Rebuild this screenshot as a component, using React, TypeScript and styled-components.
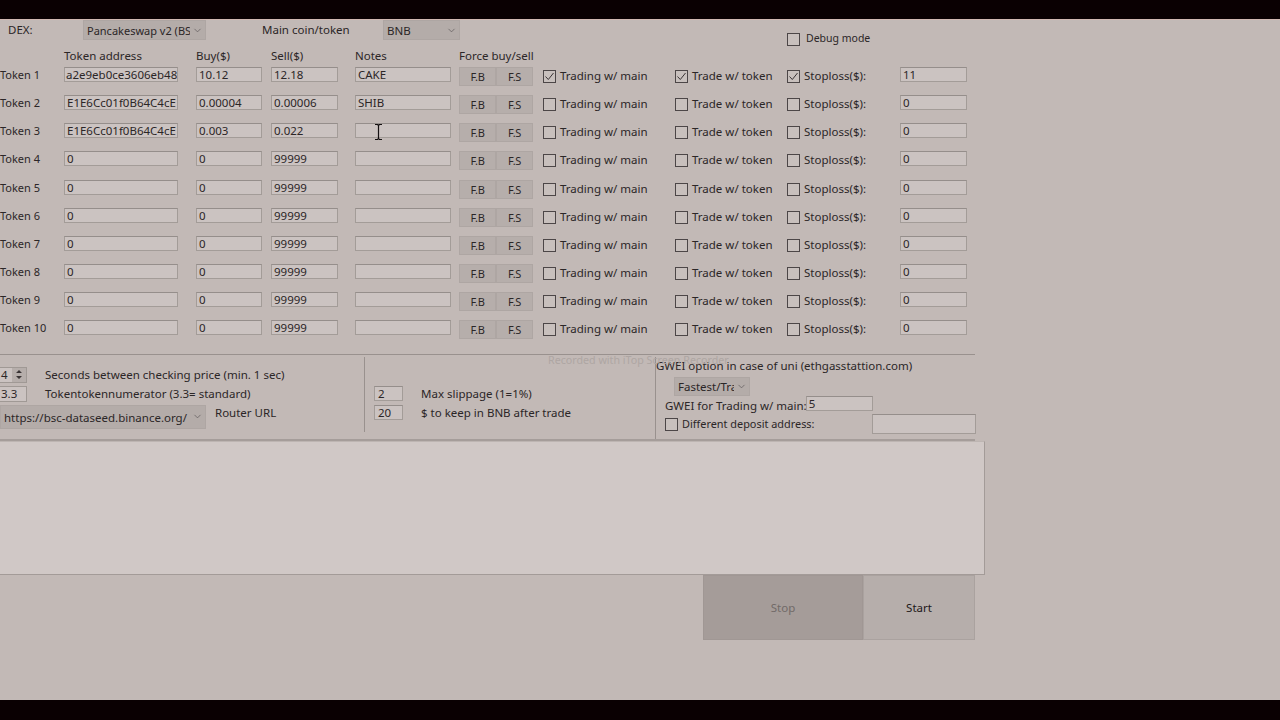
import { Fragment } from "react"
import styled, { createGlobalStyle } from "styled-components"
import { ChevronDown } from "lucide-react"

const GlobalStyle = createGlobalStyle`
	html, body {
		margin: 0;
		padding: 0;
		background: #0a0002;
	}
`

const Screen = styled.div`
	width: 1280px;
	height: 720px;
	overflow: hidden;
	display: flex;
	flex-direction: column;
	background: #0a0002;
	font-family: "Noto Sans", "Open Sans", sans-serif;
	font-size: 11.5px;
	color: #2b2627;
`

const Bar = styled.div<{ $h: number }>`
	flex: none;
	height: ${(p) => p.$h}px;
`

const Window = styled.div`
	position: relative;
	flex: 1;
	background: #c2b9b6;
	border-top: 1px solid #d0b8b2;
`

const TopRow = styled.div`
	display: flex;
	align-items: flex-start;
	width: 975px;
	height: 26px;
`

const TopLabel = styled.div<{ $w: number; $ml?: number }>`
	width: ${(p) => p.$w}px;
	margin-left: ${(p) => p.$ml ?? 0}px;
	height: 20px;
	line-height: 20px;
`

const Select = styled.div<{ $w: number; $h?: number; $small?: boolean }>`
	flex: none;
	display: flex;
	align-items: center;
	justify-content: space-between;
	box-sizing: border-box;
	width: ${(p) => p.$w}px;
	height: ${(p) => p.$h ?? 20}px;
	padding: 0 2px 0 3px;
	background: #b4aca9;
	border: 1px solid #aea6a3;
	font-size: ${(p) => (p.$small ? 11 : 11.5)}px;
	white-space: nowrap;
`

const SelectText = styled.span`
	overflow: hidden;
	flex: 1;
`

const UrlText = styled(SelectText)`
	padding-top: 2px;
`

const DebugToggle = styled.div`
	display: flex;
	align-items: center;
	gap: 6px;
	margin-left: auto;
	margin-top: 10px;
	width: 188px;
	font-size: 10.5px;
`

const columns = "64px 132px 75px 84px 104px 84px 132px 112px 113px 75px"

const HeaderRow = styled.div`
	display: grid;
	grid-template-columns: ${columns};
	width: 975px;
	height: 21px;
	line-height: 20px;
`

const Rows = styled.div`
	display: grid;
	grid-template-columns: ${columns};
	grid-auto-rows: 28.17px;
	width: 975px;
`

const TokenLabel = styled.div`
	height: 16px;
	line-height: 16px;
	font-size: 11px;
`

const Field = styled.div<{ $w?: number; $h?: number; $tight?: boolean }>`
	box-sizing: border-box;
	width: ${(p) => (p.$w ? `${p.$w}px` : "100%")};
	height: ${(p) => p.$h ?? 15}px;
	line-height: ${(p) => (p.$h ?? 15) - 1}px;
	padding-left: ${(p) => (p.$tight ? 1 : 2)}px;
	background: #cbc3c1;
	border: 1px solid #a39c98;
	border-top-color: #958e8b;
	overflow: hidden;
	white-space: nowrap;
`

const ButtonPair = styled.div`
	display: flex;
	width: 74px;
	height: 19px;
`

const SmallButton = styled.div`
	flex: 1;
	display: flex;
	align-items: center;
	justify-content: center;
	background: #b6aeab;
	border: 1px solid #aea6a3;
	font-size: 11px;
	letter-spacing: -0.3px;
`

const Option = styled.div<{ $small?: boolean }>`
	display: flex;
	align-items: flex-start;
	gap: 4px;
	line-height: 18px;
	font-size: ${(p) => (p.$small ? 10.9 : 11.5)}px;
	white-space: nowrap;
`

const Box = styled.span`
	flex: none;
	display: flex;
	align-items: center;
	justify-content: center;
	box-sizing: border-box;
	width: 13px;
	height: 13px;
	margin-top: 3px;
	border: 1px solid #4c4647;
	background: #c8c0bd;
`

const BottomPanels = styled.div`
	display: grid;
	grid-template-columns: 364px 291px 321px;
	width: 975px;
	height: 84px;
	margin-top: 5px;
	border-top: 1px solid #99918e;
	border-bottom: 2px solid #a59d9a;
`

const LeftPanel = styled.div`
	display: flex;
	flex-direction: column;
	gap: 3px;
	padding-top: 12px;
`

const MiddlePanel = styled.div`
	display: flex;
	flex-direction: column;
	gap: 3px;
	padding: 29px 0 0 9px;
	margin: 2px 0 7px;
	border-left: 1px solid #99918e;
`

const RightPanel = styled.div`
	display: flex;
	flex-direction: column;
	margin-top: 2px;
	border-left: 1px solid #99918e;
`

const SettingRow = styled.div`
	display: flex;
	align-items: center;
	height: 16px;
	gap: 18px;
`

const UrlRow = styled.div`
	display: flex;
	align-items: flex-start;
	gap: 9px;
`

const UrlLabel = styled.div`
	line-height: 16px;
`

const Spin = styled.div`
	display: flex;
	align-items: center;
	box-sizing: border-box;
	width: 27px;
	height: 16px;
	background: #cbc3c1;
	border: 1px solid #a09995;
	border-left: none;
`

const SpinValue = styled.span`
	flex: 1;
	padding-left: 1px;
`

const SpinArrows = styled.span`
	display: flex;
	align-items: center;
	justify-content: center;
	width: 14px;
	height: 100%;
	background: #b6aeab;
`

const SlipField = styled(Field)`
	width: 29px;
	flex: none;
	padding-left: 3px;
`

const GweiTitle = styled.div`
	line-height: 18px;
`

const GweiSelectRow = styled.div`
	display: flex;
	padding: 2px 0 0 18px;
`

const GweiRow = styled.div`
	display: flex;
	align-items: flex-start;
	padding-left: 9px;
	height: 17px;
	line-height: 20px;
	white-space: nowrap;
`

const GweiField = styled(Field)`
	margin-left: -1px;
`

const DepositRow = styled.div`
	display: flex;
	align-items: center;
	justify-content: space-between;
	padding-left: 9px;
	margin-top: 1px;
`

const DepositField = styled(Field)`
	width: 104px;
	height: 20px;
`

const LogArea = styled.div`
	box-sizing: border-box;
	width: 985px;
	height: 134px;
	background: #d0c8c6;
	border: 1px solid #a39b98;
	border-left: none;
	border-top-color: #bdb5b2;
`

const ActionRow = styled.div`
	display: flex;
	justify-content: flex-end;
	width: 975px;
`

const ActionButton = styled.div<{ $disabled?: boolean }>`
	display: flex;
	align-items: center;
	justify-content: center;
	box-sizing: border-box;
	width: ${(p) => (p.$disabled ? 160 : 112)}px;
	height: 65px;
	background: ${(p) => (p.$disabled ? "#a59c99" : "#b6aeab")};
	color: ${(p) => (p.$disabled ? "#716a68" : "#1d1819")};
	border: 1px solid ${(p) => (p.$disabled ? "#a09794" : "#aaa29f")};
`

const Watermark = styled.div`
	position: absolute;
	left: 548px;
	top: 333px;
	font-size: 10.7px;
	color: #aea6a3;
	white-space: nowrap;
`

const TextCursor = styled.svg`
	position: absolute;
	left: 374px;
	top: 104px;
`

const TOKENS = [
	{ address: "a2e9eb0ce3606eb48", buy: "10.12", sell: "12.18", notes: "CAKE", on: true, stop: "11" },
	{ address: "E1E6Cc01f0B64C4cE", buy: "0.00004", sell: "0.00006", notes: "SHIB", on: false, stop: "0" },
	{ address: "E1E6Cc01f0B64C4cE", buy: "0.003", sell: "0.022", notes: "", on: false, stop: "0" },
	...[4, 5, 6, 7, 8, 9, 10].map(() => ({
		address: "0",
		buy: "0",
		sell: "99999",
		notes: "",
		on: false,
		stop: "0",
	})),
]

function Check({ on }: { on?: boolean }) {
	return (
		<Box>
			{on && (
				<svg width="11" height="11" viewBox="0 0 11 11">
					<path d="M1.5 5.5 L4.3 8.5 L9.5 2" fill="none" stroke="#3a3435" strokeWidth="1" />
				</svg>
			)}
		</Box>
	)
}

const Chevron = styled(ChevronDown).attrs({ size: 11, color: "#5c5657", strokeWidth: 1.5 })`
	flex: none;
	margin-left: 2px;
`

export default function App() {
	return (
		<Screen>
			<GlobalStyle />
			<Bar $h={19} />
			<Window>
				<TopRow>
					<TopLabel $w={75} $ml={8}>DEX:</TopLabel>
					<Select $w={123} $small>
						<SelectText>Pancakeswap v2 (BSC)</SelectText>
						<Chevron />
					</Select>
					<TopLabel $w={121} $ml={56}>Main coin/token</TopLabel>
					<Select $w={77}>
						<SelectText>BNB</SelectText>
						<Chevron />
					</Select>
					<DebugToggle>
						<Check />
						Debug mode
					</DebugToggle>
				</TopRow>
				<HeaderRow>
					<span />
					<span>Token address</span>
					<span>Buy($)</span>
					<span>Sell($)</span>
					<span>Notes</span>
					<span>Force buy/sell</span>
				</HeaderRow>
				<Rows>
					{TOKENS.map((t, i) => (
						<Fragment key={i}>
							<TokenLabel>Token {i + 1}</TokenLabel>
							<Field $w={114} $tight={i === 0}>{t.address}</Field>
							<Field $w={66}>{t.buy}</Field>
							<Field $w={67}>{t.sell}</Field>
							<Field $w={96}>{t.notes}</Field>
							<ButtonPair>
								<SmallButton>F.B</SmallButton>
								<SmallButton>F.S</SmallButton>
							</ButtonPair>
							<Option>
								<Check on={t.on} />
								Trading w/ main
							</Option>
							<Option>
								<Check on={t.on} />
								Trade w/ token
							</Option>
							<Option>
								<Check on={t.on} />
								Stoploss($):
							</Option>
							<Field $w={67}>{t.stop}</Field>
						</Fragment>
					))}
				</Rows>
				<BottomPanels>
					<LeftPanel>
						<SettingRow>
							<Spin>
								<SpinValue>4</SpinValue>
								<SpinArrows>
									<svg width="8" height="11" viewBox="0 0 8 11">
										<path d="M4 1 L7 4 H1 Z M4 10 L7 7 H1 Z" fill="#3a3435" />
									</svg>
								</SpinArrows>
							</Spin>
							<span>Seconds between checking price (min. 1 sec)</span>
						</SettingRow>
						<SettingRow>
							<Spin>
								<SpinValue>3.3</SpinValue>
							</Spin>
							<span>Tokentokennumerator (3.3= standard)</span>
						</SettingRow>
						<UrlRow>
							<Select $w={206} $h={24}>
								<UrlText>https://bsc-dataseed.binance.org/</UrlText>
								<Chevron />
							</Select>
							<UrlLabel>Router URL</UrlLabel>
						</UrlRow>
					</LeftPanel>
					<MiddlePanel>
						<SettingRow>
							<SlipField>2</SlipField>
							<span>Max slippage (1=1%)</span>
						</SettingRow>
						<SettingRow>
							<SlipField>20</SlipField>
							<span>$ to keep in BNB after trade</span>
						</SettingRow>
					</MiddlePanel>
					<RightPanel>
						<GweiTitle>GWEI option in case of uni (ethgasstattion.com)</GweiTitle>
						<GweiSelectRow>
							<Select $w={76} $h={19}>
								<SelectText>Fastest/Trader</SelectText>
								<Chevron />
							</Select>
						</GweiSelectRow>
						<GweiRow>
							GWEI for Trading w/ main:
							<GweiField $w={67}>5</GweiField>
						</GweiRow>
						<DepositRow>
							<Option $small>
								<Check />
								Different deposit address:
							</Option>
							<DepositField />
						</DepositRow>
					</RightPanel>
				</BottomPanels>
				<LogArea />
				<ActionRow>
					<ActionButton $disabled>Stop</ActionButton>
					<ActionButton>Start</ActionButton>
				</ActionRow>
				<Watermark>Recorded with iTop Screen Recorder</Watermark>
				<TextCursor width="9" height="16" viewBox="0 0 9 16">
					<path d="M1 0.5 H3.5 L4.5 1.5 L5.5 0.5 H8 M4.5 1.5 V14.5 M1 15.5 H3.5 L4.5 14.5 L5.5 15.5 H8" fill="none" stroke="#141011" strokeWidth="1.2" />
				</TextCursor>
			</Window>
			<Bar $h={20} />
		</Screen>
	)
}
